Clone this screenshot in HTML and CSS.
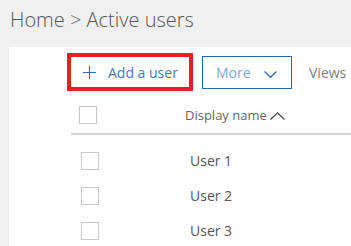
FILE: index.html
```html
<!DOCTYPE html>
<html lang="en">
<head>
    <meta charset="UTF-8">
    <title>Active users</title>
    <link rel="stylesheet" href="styles.css">
</head>
<body>
    <div class="breadcrumb">Home &gt; Active users</div>
    <div class="panel">
        <div class="toolbar">
            <button class="add-user">
                <svg class="plus" width="13" height="13" viewBox="0 0 13 13">
                    <path d="M6.5 0V13M0 6.5H13" stroke="#2f6db3" stroke-width="1.2" fill="none"/>
                </svg>
                <span>Add a user</span>
            </button>
            <button class="more">
                <span>More</span>
                <svg class="chevron" width="13" height="7" viewBox="0 0 13 7">
                    <path d="M0.5 0.5L6.5 6.3L12.5 0.5" stroke="#2f6db3" stroke-width="1.3" fill="none"/>
                </svg>
            </button>
            <span class="views">Views</span>
        </div>
        <div class="list-header">
            <span class="check"></span>
            <span class="col-name">Display name</span>
            <svg class="sort" width="15" height="8" viewBox="0 0 15 8">
                <path d="M0.5 7.5L7.5 0.8L14.5 7.5" stroke="#444" stroke-width="1.2" fill="none"/>
            </svg>
        </div>
        <div class="rows">
            <div class="row"><span class="check"></span><span class="user">User 1</span></div>
            <div class="row"><span class="check"></span><span class="user">User 2</span></div>
            <div class="row"><span class="check"></span><span class="user">User 3</span></div>
        </div>
    </div>
</body>
</html>
```

FILE: styles.css
```css
body {
    margin: 0;
    padding: 0;
    background: #f0f0f0;
    font-family: "Open Sans", "Noto Sans", sans-serif;
    height: 246px;
    overflow: hidden;
}
.breadcrumb {
    height: 47px;
    box-sizing: border-box;
    padding: 6px 0 0 10px;
    font-size: 20px;
    font-weight: 300;
    color: #555;
}
.panel {
    margin-left: 9px;
    background: #fff;
    height: 199px;
}
.toolbar {
    display: flex;
    align-items: center;
    padding: 6px 0 0 58px;
}
button {
    font-family: "Open Sans", "Noto Sans", sans-serif;
    background: #fff;
    cursor: pointer;
    padding: 0;
    display: flex;
    align-items: center;
}
.add-user {
    width: 126px;
    height: 38px;
    border: 4px solid #ed1c24;
    padding-left: 12px;
    font-size: 14px;
    color: #3d7ab8;
}
.add-user .plus {
    margin-right: 12px;
}
.more {
    margin-left: 9px;
    width: 90px;
    height: 33px;
    border: 1px solid #2467b0;
    padding-left: 13px;
    font-size: 14px;
    color: #7eaad8;
}
.more .chevron {
    margin-left: 13px;
    margin-top: 5px;
}
.views {
    margin-left: 17px;
    font-size: 14px;
    color: #808080;
}
.list-header {
    display: flex;
    align-items: center;
    margin: 6px 0 0 62px;
    height: 36px;
    padding-left: 8px;
    border-bottom: 2px solid #d4d4d4;
}
.check {
    display: block;
    width: 16px;
    height: 16px;
    border: 1px solid #c8c8c8;
    flex-shrink: 0;
}
.col-name {
    margin-left: 88px;
    font-size: 13px;
    color: #666;
}
.sort {
    margin-left: 3px;
    margin-top: 1px;
}
.rows {
    padding: 8px 0 0 72px;
}
.row {
    display: flex;
    align-items: center;
    height: 35px;
}
.user {
    margin-left: 91px;
    font-size: 14px;
    color: #555;
}
```
